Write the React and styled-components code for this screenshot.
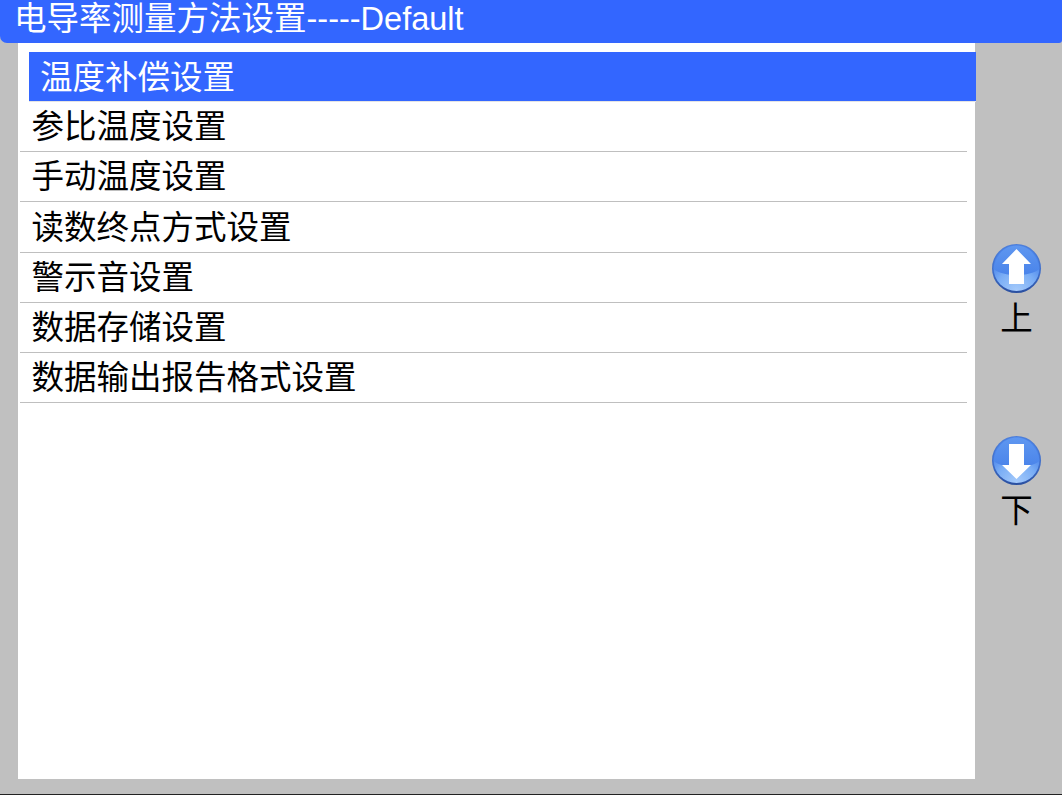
import React from "react";
import styled, { createGlobalStyle } from "styled-components";

const Global = createGlobalStyle`
  html, body { margin: 0; padding: 0; background: #c0c0c0; }
  body { font-family: "Liberation Sans", "Noto Sans CJK SC", sans-serif; }
`;
const Screen = styled.div`
  width: 1062px; height: 795px; background: #c0c0c0; display: flex; flex-direction: column;
  overflow: hidden; box-sizing: border-box; border-bottom: 1px solid #222;
  padding-bottom: 1px;
`;
const Header = styled.header`
  height: 43px; flex: none; background: #3366ff; color: #fff; font-size: 32.5px; line-height: 39px;
  padding-left: 14px; border-radius: 0 0 3px 7px;
  white-space: nowrap;
`;
const Body = styled.div`
  flex: 1; display: flex; align-items: flex-start; padding-left: 18px;
`;
const Panel = styled.main`
  width: 957px; height: 736px; background: #fff; padding-top: 9px; box-sizing: border-box; flex: none;
`;
const Row = styled.div`
  box-sizing: border-box; font-size: 32.5px; white-space: nowrap; width: 947px;
  height: ${p => p.$h}px;
  line-height: ${p => p.$h + 1}px;
  padding-left: 11.5px;
  margin-left: 2px;
  border-bottom: 1px solid #bfbfbf;
`;
const SelectedRow = styled(Row)`
  color: #fff; background: #3366ff; margin-left: 11px; padding-left: 11px;
  line-height: ${p => p.$h + 3}px;
  border-bottom: 1px solid #e4e4e4;
`;
const Side = styled.aside`
  flex: 1; display: flex; flex-direction: column; align-items: center; padding: 201px 4px 0 0;
`;
const NavButton = styled.button`
  padding: 0; background: none; border: 0;
  display: flex; flex-direction: column; align-items: center;
  font: inherit; font-size: 32.5px; line-height: 51px; color: #000; margin-bottom: ${p => p.$gap || 0}px;
`;
const Icon = styled.svg`
  width: 50px; height: 50px; display: block; flex: none;
`;

const Arrow = ({ down }) => {
  const id = down ? "d" : "u";
  return (
    <Icon viewBox="0 0 50 50">
      <defs>
        <linearGradient id={id + "r"} x1="0" y1="0" x2="0" y2="1">
          <stop offset="0" stopColor="#4f7fd8" />
          <stop offset="0.6" stopColor="#3d6cc8" />
          <stop offset="1" stopColor="#2a4f9f" />
        </linearGradient>
        <radialGradient id={id + "f"} cx="0.5" cy="1" r="0.75">
          <stop offset="0" stopColor="#a6cbfb" />
          <stop offset="0.6" stopColor="#79adf5" />
          <stop offset="1" stopColor="#4a84ea" />
        </radialGradient>
        <linearGradient id={id + "t"} x1="0" y1="0" x2="0" y2="1">
          <stop offset="0" stopColor="#5f97f0" />
          <stop offset="1" stopColor="#4a84ea" />
        </linearGradient>
      </defs>
      <circle cx="24.5" cy="24.5" r="24.5" fill={`url(#${id}r)`} />
      <circle cx="24.5" cy="24" r="23" fill={`url(#${id}f)`} />
      <path d="M1.8 25 C3 11 13 1.5 24.5 1.5 C36 1.5 46 11 47.2 25 C38 33 11 33 1.8 25Z" fill={`url(#${id}t)`} />
      <path
        d={down ? "M17 8 H32 V29 H39 L24.5 43 L10 29 H17 Z" : "M24.5 5 L39 20 H32 V40 H17 V20 H10 Z"}
        fill="#fff"
      />
    </Icon>
  );
};

const items = ["参比温度设置", "手动温度设置", "读数终点方式设置", "警示音设置", "数据存储设置", "数据输出报告格式设置"];
const heights = [50, 50, 51, 50, 50, 50];

export default function App() {
  return (
    <Screen>
      <Global />
      <Header>电导率测量方法设置-----Default</Header>
      <Body>
        <Panel>
          <SelectedRow $h={50}>温度补偿设置</SelectedRow>
          {items.map((t, i) => <Row key={t} $h={heights[i]}>{t}</Row>)}
        </Panel>
        <Side>
          <NavButton $gap={91}><Arrow />上</NavButton>
          <NavButton><Arrow down />下</NavButton>
        </Side>
      </Body>
    </Screen>
  );
}
